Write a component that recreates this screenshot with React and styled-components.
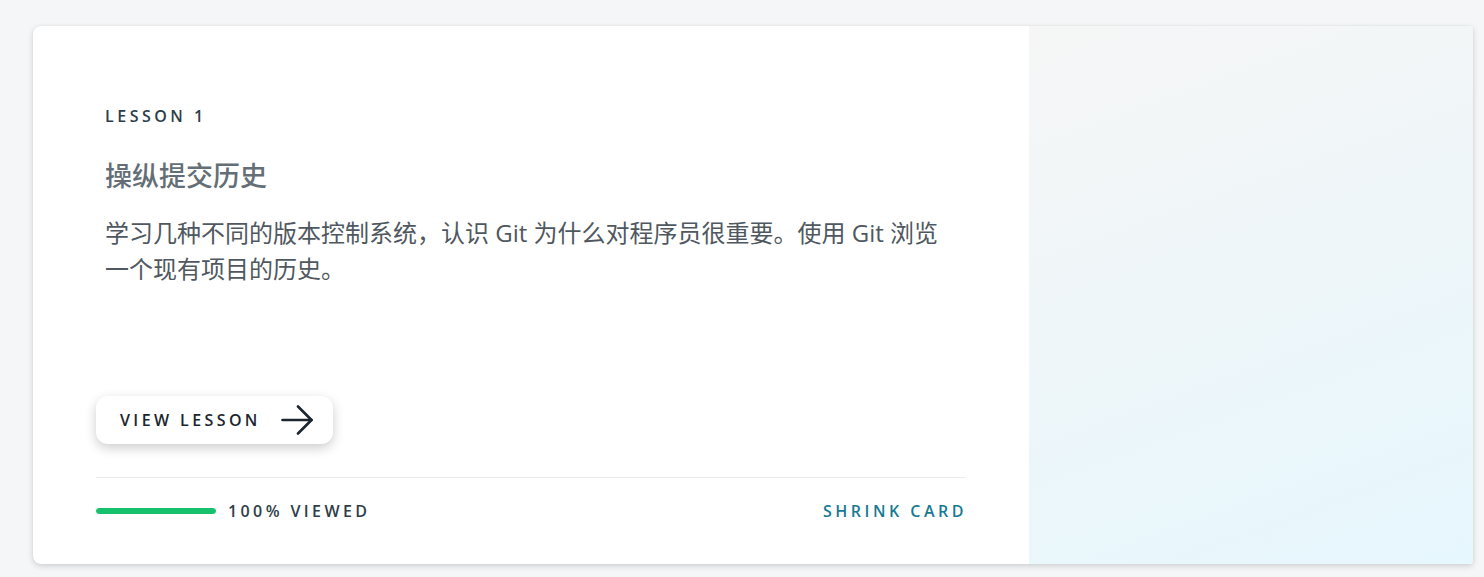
import React from "react";
import styled, { createGlobalStyle } from "styled-components";

const Global = createGlobalStyle`
  html, body { margin: 0; padding: 0; }
  body {
    background: #f5f6f8;
    font-family: "Open Sans", "Noto Sans CJK SC", sans-serif;
    -webkit-font-smoothing: antialiased;
  }
`;

const Page = styled.div`
  padding: 26px 11px 13px 33px;
`;

const Card = styled.div`
  display: flex;
  width: 1440px;
  height: 538px;
  background: #fff;
  border-radius: 8px 3px 3px 8px;
  overflow: hidden;
  box-shadow: 0 2px 6px rgba(0, 0, 0, 0.16), 0 0 2px rgba(0, 0, 0, 0.06);
`;

const Main = styled.div`
  flex: 0 0 996px;
  box-sizing: border-box;
  display: flex;
  flex-direction: column;
  padding: 78px 63px 41px;
`;

const Body = styled.div`
  padding: 0 9px;
`;

const Eyebrow = styled.div`
  font-size: 16px;
  line-height: 24px;
  font-weight: 600;
  letter-spacing: 3.5px;
  color: #2e3d49;
`;

const Title = styled.h2`
  margin: 30px 0 0;
  font-size: 27px;
  line-height: 35px;
  font-weight: 500;
  color: #646e76;
`;

const Desc = styled.p`
  margin: 22px 0 0;
  font-size: 24px;
  line-height: 36px;
  font-weight: 400;
  color: #4f5860;
`;

const Button = styled.button`
  margin-top: auto;
  align-self: flex-start;
  display: flex;
  align-items: center;
  gap: 20px;
  height: 48px;
  padding: 0 20px 0 24px;
  border: none;
  border-radius: 12px;
  background: #fff;
  box-shadow: 0 4px 12px rgba(0, 0, 0, 0.2);
  font-family: inherit;
  font-size: 16px;
  font-weight: 600;
  letter-spacing: 3.4px;
  color: #1c262f;
  cursor: pointer;
`;

const Divider = styled.hr`
  margin: 33px 0 0;
  border: none;
  height: 1px;
  background: #ececec;
`;

const Footer = styled.div`
  margin-top: 21px;
  display: flex;
  align-items: center;
  height: 24px;
`;

const Bar = styled.div`
  width: 120px;
  height: 6px;
  border-radius: 3px;
  background: #e7eaec;
  overflow: hidden;
`;

const Fill = styled.div`
  height: 100%;
  background: #15c26b;
  border-radius: 3px;
`;

const Label = styled.span`
  margin-left: 12px;
  font-size: 16px;
  font-weight: 600;
  letter-spacing: 3.4px;
  color: #2e3d49;
`;

const Shrink = styled.span`
  margin-left: auto;
  margin-right: -1px;
  font-size: 16px;
  font-weight: 600;
  letter-spacing: 3.5px;
  color: #177a93;
  cursor: pointer;
`;

const Aside = styled.div`
  flex: 1;
  background: linear-gradient(160deg, #f6f6f6 0%, #eef6f9 50%, #e6f7fd 100%);
`;

const Arrow = () => (
  <svg width="32" height="30" viewBox="0 0 32 30" fill="none" stroke="#1c262f" strokeWidth="2.6" strokeLinecap="round" strokeLinejoin="round">
    <path d="M1.5 15h29" />
    <path d="M17 1.5L30.5 15 17 28.5" />
  </svg>
);

export default function App() {
  const progress = 100;
  return (
    <>
      <Global />
      <Page>
        <Card>
          <Main>
            <Body>
              <Eyebrow>LESSON 1</Eyebrow>
              <Title>操纵提交历史</Title>
              <Desc>学习几种不同的版本控制系统，认识 Git 为什么对程序员很重要。使用 Git 浏览一个现有项目的历史。</Desc>
            </Body>
            <Button>
              VIEW LESSON
              <Arrow />
            </Button>
            <Divider />
            <Footer>
              <Bar>
                <Fill style={{ width: `${progress}%` }} />
              </Bar>
              <Label>100% VIEWED</Label>
              <Shrink>SHRINK CARD</Shrink>
            </Footer>
          </Main>
          <Aside />
        </Card>
      </Page>
    </>
  );
}
